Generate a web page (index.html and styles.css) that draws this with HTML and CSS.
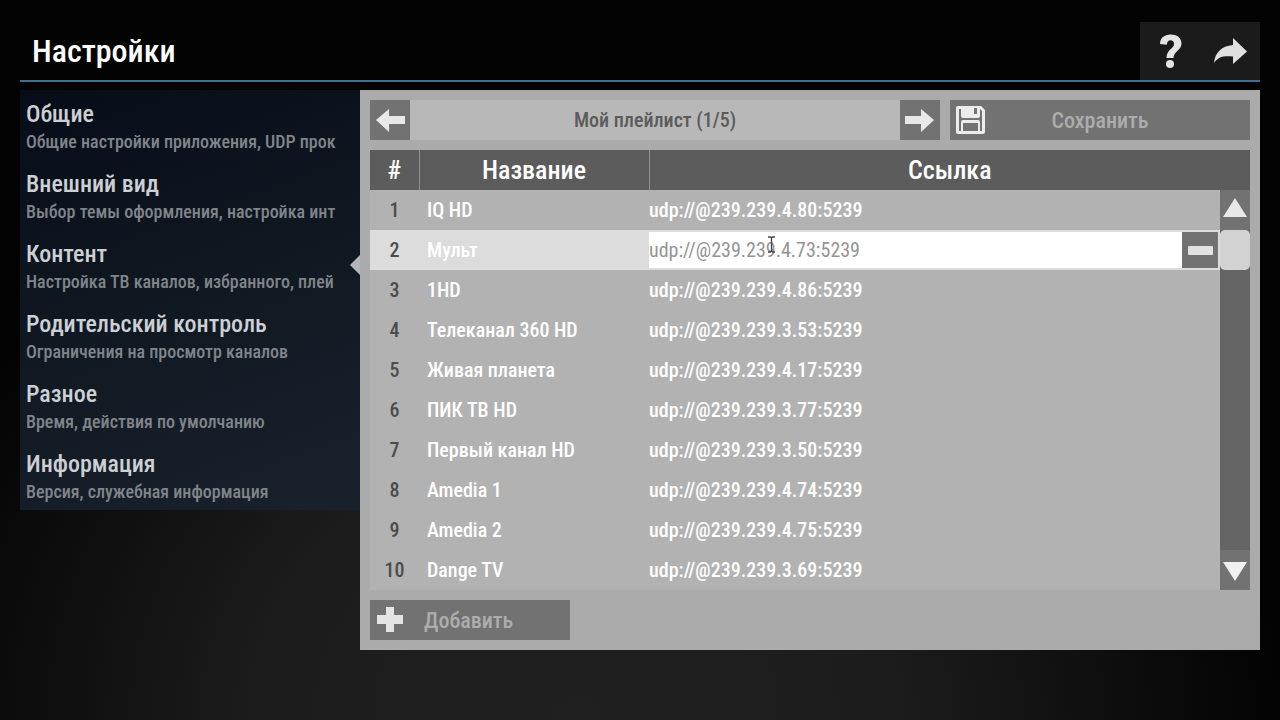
FILE: index.html
```html
<!DOCTYPE html>
<html lang="ru">
<head>
    <meta charset="UTF-8">
    <meta name="viewport" content="width=device-width, initial-scale=1.0">
    <title>Настройки</title>
    <link rel="stylesheet" href="styles.css">
</head>
<body>
    <header class="header">
        <h1>Настройки</h1>
        <div class="header-buttons">
            <button type="button" aria-label="Помощь">
                <svg width="40" height="40" viewBox="0 0 40 40">
                    <path d="M10 13C10 7 14.500 3.500 20.500 3.500C27 3.500 31.500 6.800 31.500 12.500C31.500 19.500 23.500 20 23.500 27H16.500C16.500 18.500 24 17.800 24 13C24 10.500 22.700 9.300 20.500 9.300S17 10.800 16.800 13.800Z" fill="#e4e4e4"/>
                    <circle cx="20" cy="33" r="4" fill="#e4e4e4"/>
                </svg>
            </button>
            <button type="button" aria-label="Выход">
                <svg width="40" height="40" viewBox="0 0 40 40">
                    <path d="M4 32C5 22 11 15 23 14V7L37 20.500L23 33V25.500C13 24.500 8 26 4 32Z" fill="#e0e0e0"/>
                </svg>
            </button>
        </div>
    </header>

    <main class="main">
        <nav class="menu">
            <a href="#general">
                <span class="menu-title">Общие</span>
                <span class="menu-text">Общие настройки приложения, UDP прок</span>
            </a>
            <a href="#view">
                <span class="menu-title">Внешний вид</span>
                <span class="menu-text">Выбор темы оформления, настройка инт</span>
            </a>
            <a href="#content" class="active">
                <span class="menu-title">Контент</span>
                <span class="menu-text">Настройка ТВ каналов, избранного, плей</span>
            </a>
            <a href="#parental">
                <span class="menu-title">Родительский контроль</span>
                <span class="menu-text">Ограничения на просмотр каналов</span>
            </a>
            <a href="#misc">
                <span class="menu-title">Разное</span>
                <span class="menu-text">Время, действия по умолчанию</span>
            </a>
            <a href="#info">
                <span class="menu-title">Информация</span>
                <span class="menu-text">Версия, служебная информация</span>
            </a>
        </nav>

        <section class="panel">
            <div class="toolbar">
                <div class="playlist">
                    <button type="button" class="button" aria-label="Предыдущий плейлист">
                        <svg width="40" height="40" viewBox="0 0 40 40">
                            <path d="M6 20L19 9V16H35V24H19V32Z" fill="#e8e8e8"/>
                        </svg>
                    </button>
                    <span class="playlist-name">Мой плейлист (1/5)</span>
                    <button type="button" class="button" aria-label="Следующий плейлист">
                        <svg width="40" height="40" viewBox="0 0 40 40">
                            <path d="M34 20L21 9V16H5V24H21V32Z" fill="#e8e8e8"/>
                        </svg>
                    </button>
                </div>
                <button type="button" class="button save">
                    <svg width="40" height="40" viewBox="0 0 40 40">
                        <path fill-rule="evenodd" d="M8 6H31L35 10V32Q35 34 33 34H8Q6 34 6 32V8Q6 6 8 6ZM9 9V31H11V22Q11 20 13 20H28Q30 20 30 22V31H32V11L30 9V16Q30 18 28 18H13Q11 18 11 16V9ZM13 23V31H28V23ZM24 8V14H27V8Z" fill="#ececec"/>
                    </svg>
                    <span>Сохранить</span>
                </button>
            </div>

            <div class="table-box">
                <table class="channels">
                    <thead>
                        <tr>
                            <th class="col-num">#</th>
                            <th class="col-name">Название</th>
                            <th>Ссылка</th>
                        </tr>
                    </thead>
                    <tbody>
                        <tr><td>1</td><td>IQ HD</td><td>udp://@239.239.4.80:5239</td></tr>
                        <tr class="selected">
                            <td>2</td>
                            <td>Мульт</td>
                            <td>
                                <div class="edit">
                                    <input type="text" value="udp://@239.239.4.73:5239" aria-label="Ссылка">
                                    <button type="button" class="button remove" aria-label="Удалить">
                                        <svg width="36" height="36" viewBox="0 0 36 36">
                                            <rect x="6" y="14" width="25" height="9" rx="1" fill="#e2e2e2"/>
                                        </svg>
                                    </button>
                                    <svg class="cursor" width="9" height="17" viewBox="0 0 9 17">
                                        <path d="M1 1H3.500L4.500 2L5.500 1H8M4.500 2V15M1 16H3.500L4.500 15L5.500 16H8" fill="none" stroke="#444" stroke-width="1.300"/>
                                    </svg>
                                </div>
                            </td>
                        </tr>
                        <tr><td>3</td><td>1HD</td><td>udp://@239.239.4.86:5239</td></tr>
                        <tr><td>4</td><td>Телеканал 360 HD</td><td>udp://@239.239.3.53:5239</td></tr>
                        <tr><td>5</td><td>Живая планета</td><td>udp://@239.239.4.17:5239</td></tr>
                        <tr><td>6</td><td>ПИК ТВ HD</td><td>udp://@239.239.3.77:5239</td></tr>
                        <tr><td>7</td><td>Первый канал HD</td><td>udp://@239.239.3.50:5239</td></tr>
                        <tr><td>8</td><td>Amedia 1</td><td>udp://@239.239.4.74:5239</td></tr>
                        <tr><td>9</td><td>Amedia 2</td><td>udp://@239.239.4.75:5239</td></tr>
                        <tr><td>10</td><td>Dange TV</td><td>udp://@239.239.3.69:5239</td></tr>
                    </tbody>
                </table>
                <div class="scrollbar">
                    <button type="button" aria-label="Вверх">
                        <svg width="30" height="40" viewBox="0 0 30 40">
                            <path d="M15 8L27 27H3Z" fill="#e8e8e8"/>
                        </svg>
                    </button>
                    <div class="track"><div class="thumb"></div></div>
                    <button type="button" aria-label="Вниз">
                        <svg width="30" height="40" viewBox="0 0 30 40">
                            <path d="M15 31L3 12H27Z" fill="#f0f0f0"/>
                        </svg>
                    </button>
                </div>
            </div>

            <button type="button" class="button add">
                <svg width="40" height="40" viewBox="0 0 40 40">
                    <path d="M16 7H24V15H33V24H24V32H16V24H7V15H16Z" fill="#e4e4e4"/>
                </svg>
                <span>Добавить</span>
            </button>
        </section>
    </main>
</body>
</html>
```
FILE: styles.css
```css
:root {
    --button-color: #727272;
    --head-color: #5c5c5c;
    --panel-color: #ababab;
    --link-color: #949494;
}

* {
    box-sizing: border-box;
}

body {
    font-family: 'Roboto Condensed', 'Liberation Sans Narrow', Roboto, sans-serif;
    font-size: 20px;
    font-weight: 500;
    margin: 0;
    min-height: 100vh;
    padding: 22px 20px;
    background: radial-gradient(ellipse 55% 85% at 45% 100%, #202020, #1c1c1c 45%, #030303);
    color: white;
}

button {
    font: inherit;
    border: none;
    padding: 0;
    background: none;
    cursor: pointer;
}

svg {
    display: block;
    flex: none;
}

.header {
    display: flex;
    justify-content: space-between;
    height: 60px;
    border-bottom: 2px solid #3f6f92;
    margin-bottom: 8px;
}

h1 {
    margin: 0 0 0 12px;
    font-size: 32px;
    font-weight: 500;
    line-height: 58px;
}

.header-buttons {
    display: flex;
    background: #1b1b1b;
}

.header-buttons button {
    width: 60px;
    display: flex;
    align-items: center;
    justify-content: center;
}

.main {
    display: flex;
    align-items: flex-start;
}

.menu {
    flex: 0 0 340px;
    min-width: 0;
    background: linear-gradient(160deg, #060d18, #101822 50%, #19222c);
}

.menu a {
    display: block;
    position: relative;
    height: 70px;
    padding: 10px 18px 0 6px;
    text-decoration: none;
}

.menu-title,
.menu-text {
    display: block;
    overflow: hidden;
    white-space: nowrap;
}

.menu-title {
    font-size: 24px;
    line-height: 28px;
    color: #ccd0d5;
}

.menu-text {
    font-size: 18px;
    line-height: 28px;
    color: #80858b;
}

.menu .active::after {
    content: "";
    position: absolute;
    right: 0;
    top: 25px;
    border: 10px solid transparent;
    border-left: none;
    border-right-color: #b4b4bc;
}

.panel {
    flex: 1;
    min-width: 0;
    padding: 10px;
    background: var(--panel-color);
}

.toolbar {
    display: flex;
    gap: 10px;
    margin-bottom: 10px;
}

.playlist {
    flex: 1;
    display: flex;
    background: #b8b8b8;
}

.playlist-name {
    flex: 1;
    line-height: 40px;
    text-align: center;
    color: #5b5b5b;
}

.button {
    display: flex;
    align-items: center;
    height: 40px;
    background: var(--button-color);
    color: #adadad;
    font-size: 22px;
}

.button span {
    flex: 1;
}

.save {
    width: 300px;
    padding-right: 40px;
}

.add {
    width: 200px;
    margin-top: 10px;
    text-align: left;
}

.add span {
    padding-left: 14px;
}

.table-box {
    position: relative;
}

.channels {
    width: 100%;
    table-layout: fixed;
    border-collapse: collapse;
    background: #b2b2b2;
}

.channels tr {
    height: 40px;
}

.channels th {
    padding: 0;
    background: var(--head-color);
    font-size: 26px;
    font-weight: 500;
}

.channels th + th {
    border-left: 1px solid #8f8f8f;
}

.channels .col-num {
    width: 49px;
}

.channels .col-name {
    width: 230px;
}

.channels td {
    padding: 0 0 0 8px;
}

.channels td:first-child {
    padding: 0;
    text-align: center;
    color: #4c4c4c;
}

.channels td:last-child {
    padding: 0 32px 0 0;
}

.selected {
    background: #dcdcdc;
}

.edit {
    position: relative;
    display: flex;
    height: 36px;
}

.edit input {
    flex: 1;
    min-width: 0;
    border: none;
    padding: 0;
    background: white;
    color: var(--link-color);
    font: inherit;
    font-weight: 400;
}

.remove {
    height: 36px;
}

.cursor {
    position: absolute;
    left: 118px;
    top: 4px;
}

.scrollbar {
    position: absolute;
    top: 40px;
    right: 0;
    bottom: 0;
    width: 30px;
    display: flex;
    flex-direction: column;
    background: var(--button-color);
}

.track {
    flex: 1;
    background: #656565;
}

.thumb {
    height: 40px;
    border-radius: 5px;
    background: #d2d2d2;
}
```
